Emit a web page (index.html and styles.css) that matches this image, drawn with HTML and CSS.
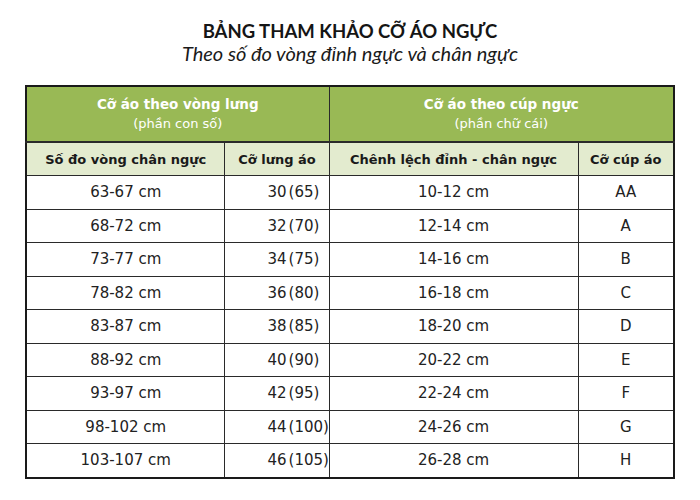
FILE: index.html
```html
<!DOCTYPE html>
<html lang="vi">
<head>
<meta charset="utf-8">
<title>Bảng tham khảo cỡ áo ngực</title>
<link rel="stylesheet" href="styles.css">
</head>
<body>
<div class="page">
  <h1 class="title">BẢNG THAM KHẢO CỠ ÁO NGỰC</h1>
  <p class="subtitle">Theo số đo vòng đỉnh ngực và chân ngực</p>
  <table class="size-table">
    <colgroup>
      <col class="c1"><col class="c2"><col class="c3"><col class="c4">
    </colgroup>
    <thead>
      <tr class="group-row">
        <th colspan="2"><span class="g-main">Cỡ áo theo vòng lưng</span><span class="g-sub">(phần con số)</span></th>
        <th colspan="2"><span class="g-main">Cỡ áo theo cúp ngực</span><span class="g-sub">(phần chữ cái)</span></th>
      </tr>
      <tr class="col-row">
        <th>Số đo vòng chân ngực</th>
        <th>Cỡ lưng áo</th>
        <th>Chênh lệch đỉnh - chân ngực</th>
        <th>Cỡ cúp áo</th>
      </tr>
    </thead>
    <tbody>
      <tr><td>63-67 cm</td><td class="band">30<span class="eu">(65)</span></td><td>10-12 cm</td><td>AA</td></tr>
      <tr><td>68-72 cm</td><td class="band">32<span class="eu">(70)</span></td><td>12-14 cm</td><td>A</td></tr>
      <tr><td>73-77 cm</td><td class="band">34<span class="eu">(75)</span></td><td>14-16 cm</td><td>B</td></tr>
      <tr><td>78-82 cm</td><td class="band">36<span class="eu">(80)</span></td><td>16-18 cm</td><td>C</td></tr>
      <tr><td>83-87 cm</td><td class="band">38<span class="eu">(85)</span></td><td>18-20 cm</td><td>D</td></tr>
      <tr><td>88-92 cm</td><td class="band">40<span class="eu">(90)</span></td><td>20-22 cm</td><td>E</td></tr>
      <tr><td>93-97 cm</td><td class="band">42<span class="eu">(95)</span></td><td>22-24 cm</td><td>F</td></tr>
      <tr><td>98-102 cm</td><td class="band">44<span class="eu">(100)</span></td><td>24-26 cm</td><td>G</td></tr>
      <tr><td>103-107 cm</td><td class="band">46<span class="eu">(105)</span></td><td>26-28 cm</td><td>H</td></tr>
    </tbody>
  </table>
</div>
</body>
</html>
```

FILE: styles.css
```css
html, body {
  margin: 0;
  padding: 0;
  background: #ffffff;
}

.page {
  width: 700px;
  height: 500px;
  display: flex;
  flex-direction: column;
  align-items: center;
  padding-top: 19px;
  box-sizing: border-box;
  font-family: "DejaVu Sans", "Liberation Sans", sans-serif;
  color: #1e1e1e;
}

.title {
  margin: 0;
  font-family: Lato, "Open Sans", sans-serif;
  font-weight: 700;
  font-size: 18.5px;
  line-height: 24px;
  color: #151515;
}

.subtitle {
  margin: -2px 0 0;
  font-family: Lato, "Open Sans", sans-serif;
  font-style: italic;
  font-size: 20px;
  line-height: 24px;
  color: #1a1a1a;
}

.size-table {
  margin-top: 20px;
  border-collapse: collapse;
  border: 2px solid #1a1a1a;
  table-layout: fixed;
  width: 648px;
}

.c1 { width: 199px; }
.c2 { width: 104px; }
.c3 { width: 249px; }
.c4 { width: 96px; }

.size-table th,
.size-table td {
  border: 1px solid #2a2a2a;
  padding: 0;
  text-align: center;
  vertical-align: middle;
}

.group-row th {
  background: #99b955;
  color: #ffffff;
  height: 54px;
  border-bottom: 2px solid #2a2a2a;
}

.g-main {
  display: block;
  font-weight: 700;
  font-size: 13.5px;
  line-height: 20px;
}

.g-sub {
  display: block;
  font-weight: 400;
  font-size: 13px;
  line-height: 20px;
}

.col-row th {
  background: #e3ebcf;
  height: 32px;
  font-weight: 700;
  font-size: 13px;
  color: #1a1a1a;
}

.size-table td {
  height: 32.5px;
  font-size: 15px;
  color: #222222;
}

.size-table td.band {
  text-align: left;
  padding-left: 42px;
}

.eu {
  margin-left: 2px;
}
```
